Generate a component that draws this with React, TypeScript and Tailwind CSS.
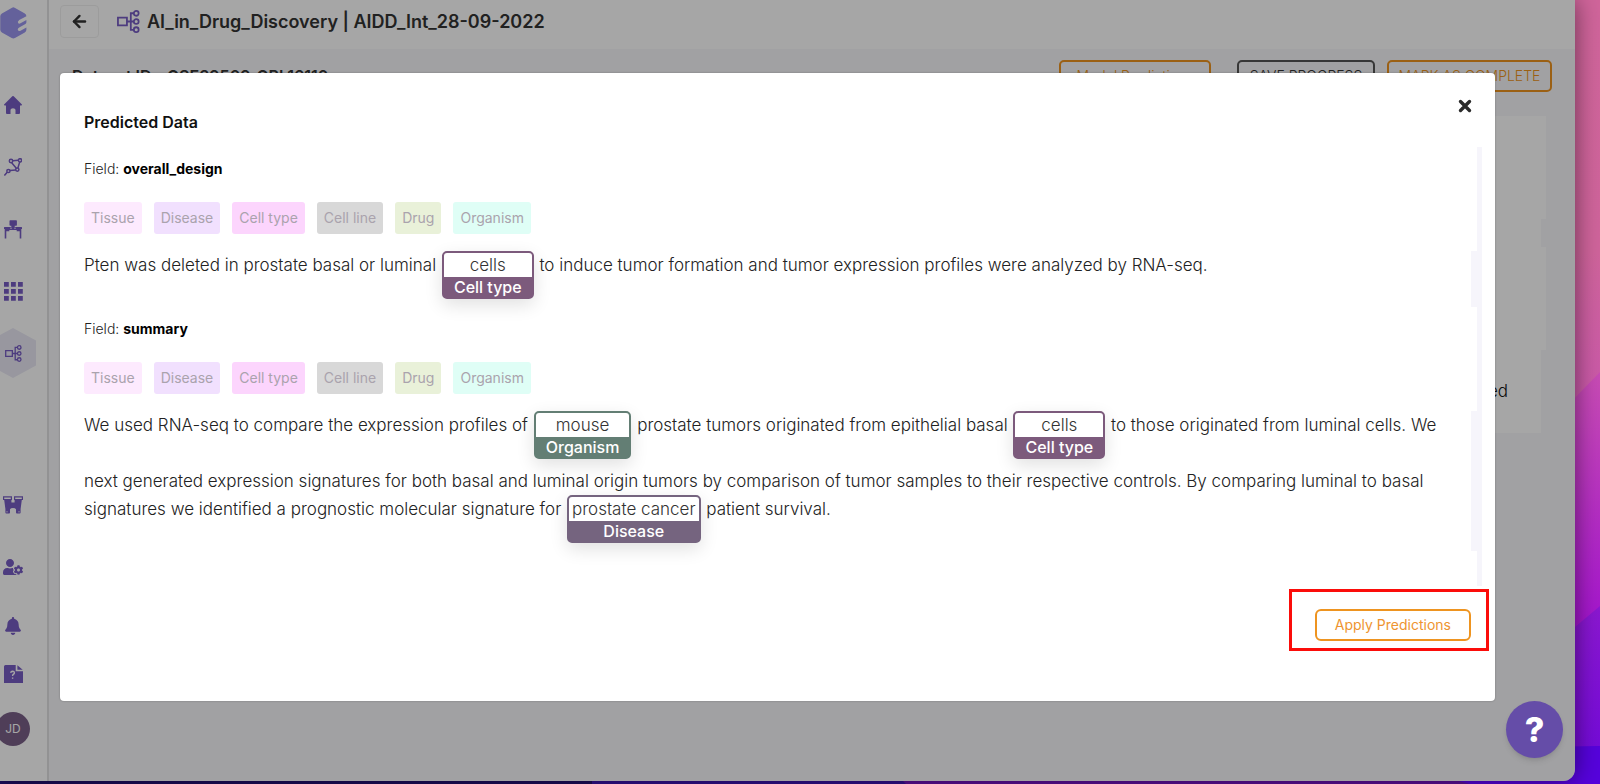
import type { ReactNode } from "react";
import { ArrowLeft } from "lucide-react";
import { FaBell, FaUserCog } from "react-icons/fa";

function LogoIcon() {
  return (
    <svg viewBox="0 0 81 98" className="h-8 w-[27px] shrink-0" fill="#9a96ee" aria-hidden="true">
      <path d="M36 2Q40 0 44 2L74 19Q80 22 80 28L58 40Q51 45 55 50Q58 52 62 50L80 40V47Q80 50 77 52L58 63Q51 68 55 72Q58 75 62 73L80 63V70Q80 75 75 78L45 95Q40 98 35 95L5 78Q0 75 0 70V28Q0 23 5 20Z" />
    </svg>
  );
}

function HomeIcon() {
  return (
    <svg viewBox="0 0 18 18" className="size-[18px]" fill="currentColor" aria-hidden="true">
      <path d="M8.3.3Q9-.3 9.700.3L17.700 8.200Q18.500 9.400 17.200 9.600H16V17Q16 18 15 18H11.500V13.800Q11.300 12.200 9 12.200Q6.700 12.200 6.500 13.800V18H3Q2 18 2 17V9.600H.8Q-.5 9.400.3 8.200Z" />
    </svg>
  );
}

function GraphIcon() {
  return (
    <svg viewBox="0 0 18 18" className="size-[18px]" fill="none" stroke="currentColor" strokeWidth="1.500" aria-hidden="true">
      <path d="M8.600 2.800L14.400 2.300M7.700 4.700L12.300 10.300M15.700 3.900L13.900 10M5.900 12.600L11.800 11.900M3.200 14.200L.4 17.500" />
      <circle cx="7" cy="3" r="1.700" />
      <circle cx="16" cy="2.300" r="1.600" />
      <circle cx="13.300" cy="11.600" r="1.600" />
      <circle cx="4.400" cy="13" r="1.600" />
    </svg>
  );
}

function DeskIcon() {
  return (
    <svg viewBox="0 0 18 19" className="h-[19px] w-[18px]" fill="currentColor" aria-hidden="true">
      <path d="M5.500 1Q5.500.3 6.200.3H12.200Q12.900.3 12.900 1V5Q12.900 5.700 12.200 5.700H10.700V7H17.500Q18 7 18 7.500V9H17.300V18.500H15.700V11.200H12.700V10H5.300V11.200H2.300V18.500H.7V9H0V7.500Q0 7 .5 7H7.300V5.700H6.200Q5.500 5.700 5.500 5Z" />
      <path d="M6.300 8.200H7.700M10.300 8.200H11.700" stroke="#fff" strokeWidth="1" />
    </svg>
  );
}

function GridIcon() {
  return (
    <svg viewBox="0 0 19 19" className="size-[19px]" fill="currentColor" aria-hidden="true">
      <path d="M0 0h4.800v4.800H0zM7 0h4.800v4.800H7zM14 0h4.800v4.800H14zM0 7h4.800v4.800H0zM7 7h4.800v4.800H7zM14 7h4.800v4.800H14zM0 14h4.800v4.800H0zM7 14h4.800v4.800H7zM14 14h4.800v4.800H14z" />
    </svg>
  );
}

function TreeIcon({ className }: { className: string }) {
  return (
    <svg viewBox="0 0 22 22" className={className} fill="none" stroke="currentColor" strokeWidth="1.700" aria-hidden="true">
      <path d="M.9 7.300H9.500V14.800H.9ZM9.500 11H16M16 3.100H13.200V19.100H16" />
      <circle cx="18.400" cy="3.200" r="2.300" />
      <circle cx="18.400" cy="11" r="2.300" />
      <circle cx="18.400" cy="18.800" r="2.300" />
    </svg>
  );
}

function BinocularsIcon() {
  return (
    <svg viewBox="0 0 20 18" className="h-[18px] w-5" aria-hidden="true">
      <path d="M1.200 4H8.400V6.500H11.600V4H18.800L17.600 13V16.500Q17.600 17.600 16.700 17.600H13.900Q13 17.600 13 16.500V13.200Q12.300 12 10 12Q7.700 12 7 13.200V16.500Q7 17.600 6.100 17.600H3.300Q2.400 17.600 2.400 16.500V13Z" fill="currentColor" />
      <path d="M.6.800H8.400V3.500H.6ZM11.600.8H19.400V3.500H11.600Z" fill="none" stroke="currentColor" strokeWidth="1.200" />
      <path d="M4 15V16.500M16 15V16.500" stroke="#fff" strokeWidth=".8" />
    </svg>
  );
}

function HelpDocIcon() {
  return (
    <svg viewBox="0 0 19 18" className="h-[18px] w-[19px]" aria-hidden="true">
      <path d="M1.500 0H11.700V6.300H19V18H0V1.500Q0 0 1.500 0ZM13.400.3L18.700 4.800H13.400Z" fill="currentColor" />
      <path d="M6.700 7.800Q6.900 6.200 8.600 6.200Q10.500 6.300 10.400 7.900Q10.300 8.900 9.300 9.400Q8.600 9.800 8.600 11M8.600 12.400V13.800" fill="none" stroke="#fff" strokeWidth="1.400" />
    </svg>
  );
}

function Wallpaper() {
  return (
    <svg viewBox="0 0 1600 784" preserveAspectRatio="none" className="absolute inset-0 size-full" aria-hidden="true">
      <defs>
        <linearGradient id="pink" x1="0" y1="0" x2="0" y2="1">
          <stop offset="0" stopColor="#d0659b" />
          <stop offset=".6" stopColor="#cf649b" />
          <stop offset="1" stopColor="#c957ab" />
        </linearGradient>
        <linearGradient id="magenta" x1="0" y1="0" x2="0" y2="1">
          <stop offset="0" stopColor="#c84cb4" />
          <stop offset="1" stopColor="#a112cf" />
        </linearGradient>
        <linearGradient id="violet" x1="0" y1="0" x2="0" y2="1">
          <stop offset="0" stopColor="#8b18d0" />
          <stop offset="1" stopColor="#6f08da" />
        </linearGradient>
      </defs>
      <rect width="1600" height="784" fill="#31108f" />
      <rect width="1600" height="420" fill="url(#pink)" />
      <path d="M1500 475L1600 372V640H1500Z" fill="url(#magenta)" />
      <path d="M1500 690L1600 606V784H1500Z" fill="url(#violet)" />
      <path d="M1430 749L1600 746V784H1430Z" fill="#5603dc" />
      <rect y="776" width="592" height="8" fill="#1c0c5c" />
      <path d="M898 776H1440L1470 784H906Z" fill="#5d109b" />
    </svg>
  );
}

type NavItem = { label: string; icon: ReactNode; active?: boolean };

const primaryNav: NavItem[] = [
  { label: "Home", icon: <HomeIcon /> },
  { label: "Networks", icon: <GraphIcon /> },
  { label: "Workspace", icon: <DeskIcon /> },
  { label: "Apps", icon: <GridIcon /> },
  { label: "Curation", icon: <TreeIcon className="size-[17px]" />, active: true },
];

const adminNav: NavItem[] = [
  { label: "Explore", icon: <BinocularsIcon /> },
  { label: "User settings", icon: <FaUserCog className="size-5" /> },
];

function NavButton({ item, height }: { item: NavItem; height: string }) {
  return (
    <button type="button" aria-label={item.label} className={`${height} flex w-[26px] items-center justify-center`}>
      {item.active ? (
        <span className="flex h-[50px] w-[46px] shrink-0 items-center justify-center bg-[#eae9f5] [clip-path:polygon(50%_0,100%_25%,100%_75%,50%_100%,0_75%,0_25%)]">
          {item.icon}
        </span>
      ) : (
        item.icon
      )}
    </button>
  );
}

function Sidebar() {
  return (
    <nav className="w-[49px] shrink-0 border-r-2 border-[#e0e0e2] bg-white text-[#775cc4]">
      <div className="flex w-[26px] flex-col items-center">
        <div className="mt-[7px] flex h-[67px] items-start justify-center">
          <LogoIcon />
        </div>
        {primaryNav.map((item) => (
          <NavButton key={item.label} item={item} height="h-[62px]" />
        ))}
        <div className="h-[90px]" />
        {adminNav.map((item) => (
          <NavButton key={item.label} item={item} height="h-[62px]" />
        ))}
        <div className="h-1" />
        <NavButton item={{ label: "Notifications", icon: <FaBell className="size-[18px]" /> }} height="h-12" />
        <NavButton item={{ label: "Help", icon: <HelpDocIcon /> }} height="h-12" />
        <button
          type="button"
          className="mt-[14px] flex size-[34px] shrink-0 items-center justify-center rounded-full bg-[#7a6088] text-xs text-white"
        >
          JD
        </button>
      </div>
    </nav>
  );
}

const chips = [
  { label: "Tissue", color: "bg-[#fdeafe]" },
  { label: "Disease", color: "bg-[#f1e0fe]" },
  { label: "Cell type", color: "bg-[#fcd5fd]" },
  { label: "Cell line", color: "bg-[#d8d8d8]" },
  { label: "Drug", color: "bg-[#e9f1d9]" },
  { label: "Organism", color: "bg-[#dffef6]" },
];

function Entity({ text, label, tone }: { text: string; label: string; tone: string }) {
  return (
    <span
      className={`${tone} mx-px mb-2 inline-flex flex-col overflow-hidden rounded-[5px] border-2 text-center shadow-[0_6px_18px_rgba(0,0,0,0.12)]`}
    >
      <span className="bg-white px-[3px] leading-6 text-[#333]">{text}</span>
      <span className="px-[10px] pt-px text-base leading-[19px] font-medium text-white">{label}</span>
    </span>
  );
}

const cellTone = "border-[#7c5a7c] bg-[#7c5a7c]";
const organismTone = "border-[#637e74] bg-[#637e74]";
const diseaseTone = "border-[#75647f] bg-[#75647f]";

function FieldBlock({ name, children }: { name: string; children: ReactNode }) {
  return (
    <section>
      <h3 className="text-sm leading-[43px] font-light text-[#222]">
        Field: <strong className="font-bold text-black">{name}</strong>
      </h3>
      <ul className="mt-3 flex gap-3">
        {chips.map((chip) => (
          <li key={chip.label} className={`${chip.color} rounded-[3px] px-[7px] text-sm leading-8 text-[#aaa3ad]`}>
            {chip.label}
          </li>
        ))}
      </ul>
      <p className="mt-[17px] border-r-[6px] border-[#f6f5fb] pr-3 text-[17px] leading-7 font-light text-[#222]">{children}</p>
    </section>
  );
}

function PredictionDialog() {
  return (
    <div
      role="dialog"
      aria-labelledby="dialog-title"
      className="absolute top-[73px] right-[105px] left-[60px] rounded-[4px] bg-white shadow-[0_0_2px_rgba(0,0,0,0.3)]"
    >
      <header className="flex h-[74px] items-start justify-between pr-[21px] pl-6">
        <h2 id="dialog-title" className="pt-[37px] text-base leading-6 font-semibold text-[#111]">
          Predicted Data
        </h2>
        <button type="button" aria-label="Close" className="mt-[24px] flex size-[18px] items-center justify-center">
          <svg viewBox="0 0 14 14" className="size-[14px]" stroke="#2b2b2b" strokeWidth="3.400" strokeLinecap="round" aria-hidden="true">
            <path d="M2.500 2.500L11.500 11.500M11.500 2.500L2.500 11.500" />
          </svg>
        </button>
      </header>
      <div className="mr-[13px] ml-6 border-r-[5px] border-[#f6f5fb] pb-[35px]">
        <FieldBlock name="overall_design">
          Pten was deleted in prostate basal or luminal <Entity text="cells" label="Cell type" tone={cellTone} /> to induce tumor
          formation and tumor expression profiles were analyzed by RNA-seq.
        </FieldBlock>
        <FieldBlock name="summary">
          We used RNA-seq to compare the expression profiles of <Entity text="mouse" label="Organism" tone={organismTone} /> prostate
          tumors originated from epithelial basal <Entity text="cells" label="Cell type" tone={cellTone} /> to those originated from
          luminal cells. We next generated expression signatures for both basal and luminal origin tumors by comparison of tumor
          samples to their respective controls. By comparing luminal to basal signatures we identified a prognostic molecular
          signature for <Entity text="prostate cancer" label="Disease" tone={diseaseTone} /> patient survival.
        </FieldBlock>
      </div>
      <footer className="flex justify-end pt-[3px] pr-[6px] pb-[50px]">
        <div className="border-[3px] border-[#fb0d0a] pt-[17px] pr-[15px] pb-[7px] pl-[23px]">
          <button type="button" className="h-8 rounded-[6px] border-2 border-[#ee9420] px-[18px] text-sm text-[#ee9430]">
            Apply Predictions
          </button>
        </div>
      </footer>
    </div>
  );
}

export default function App() {
  return (
    <div className="relative h-screen overflow-hidden font-[Inter,sans-serif]">
      <Wallpaper />
      <div className="relative mr-[25px] flex h-[calc(100vh-3px)] overflow-hidden rounded-br-[12px] bg-[#f8f8fb] shadow-[0_0_24px_rgba(0,0,0,0.5)]">
        <Sidebar />
        <main className="min-w-0 grow">
          <header className="flex h-[49px] items-center bg-white pb-[6px] pl-[11px]">
            <button
              type="button"
              aria-label="Back"
              className="flex h-[33px] w-[39px] items-center justify-center rounded-[4px] border border-[#f0f0f0] text-[#333]"
            >
              <ArrowLeft className="size-[19px]" strokeWidth={3} />
            </button>
            <TreeIcon className="ml-[18px] size-[23px] text-[#775cc4]" />
            <h1 className="ml-[7px] text-lg leading-6 font-semibold text-[#333]">AI_in_Drug_Discovery | AIDD_Int_28-09-2022</h1>
          </header>
          <div className="flex items-center pt-[11px] pr-[23px] pl-[23px]">
            <h2 className="text-base leading-8 font-semibold text-[#333]">Dataset ID - GSE39509_GPL16110</h2>
            <button type="button" className="ml-auto h-8 w-[152px] rounded-[5px] border-2 border-[#ee9420] text-sm font-light text-[#ee9420]">
              Model Predictions
            </button>
            <button type="button" className="ml-[26px] h-8 w-[138px] rounded-[5px] border-2 border-[#555] text-sm font-light text-[#333]">
              SAVE PROGRESS
            </button>
            <button type="button" className="ml-3 h-8 w-[165px] rounded-[5px] border-2 border-[#ee9420] text-sm font-light text-[#ee9420]">
              MARK AS COMPLETE
            </button>
          </div>
          <div className="mt-6 mr-[29px] ml-[23px] bg-white">
            <div className="h-[103px]" />
            <div className="h-7 border-r-[5px] border-[#f8f8fb]" />
            <div className="h-[103px]" />
            <p className="h-[83px] border-r-[5px] border-[#f8f8fb] pt-[27px] pr-[33px] text-right text-[17px] leading-7 font-light text-[#111]">
              identified
            </p>
          </div>
        </main>
        <div className="absolute inset-0 bg-black/35" />
      </div>
      <PredictionDialog />
      <button
        type="button"
        aria-label="Help"
        className="absolute right-[37px] bottom-[26px] flex size-[57px] items-center justify-center rounded-full bg-[#654da8] text-[34px] font-extrabold text-white shadow-md"
      >
        ?
      </button>
    </div>
  );
}
